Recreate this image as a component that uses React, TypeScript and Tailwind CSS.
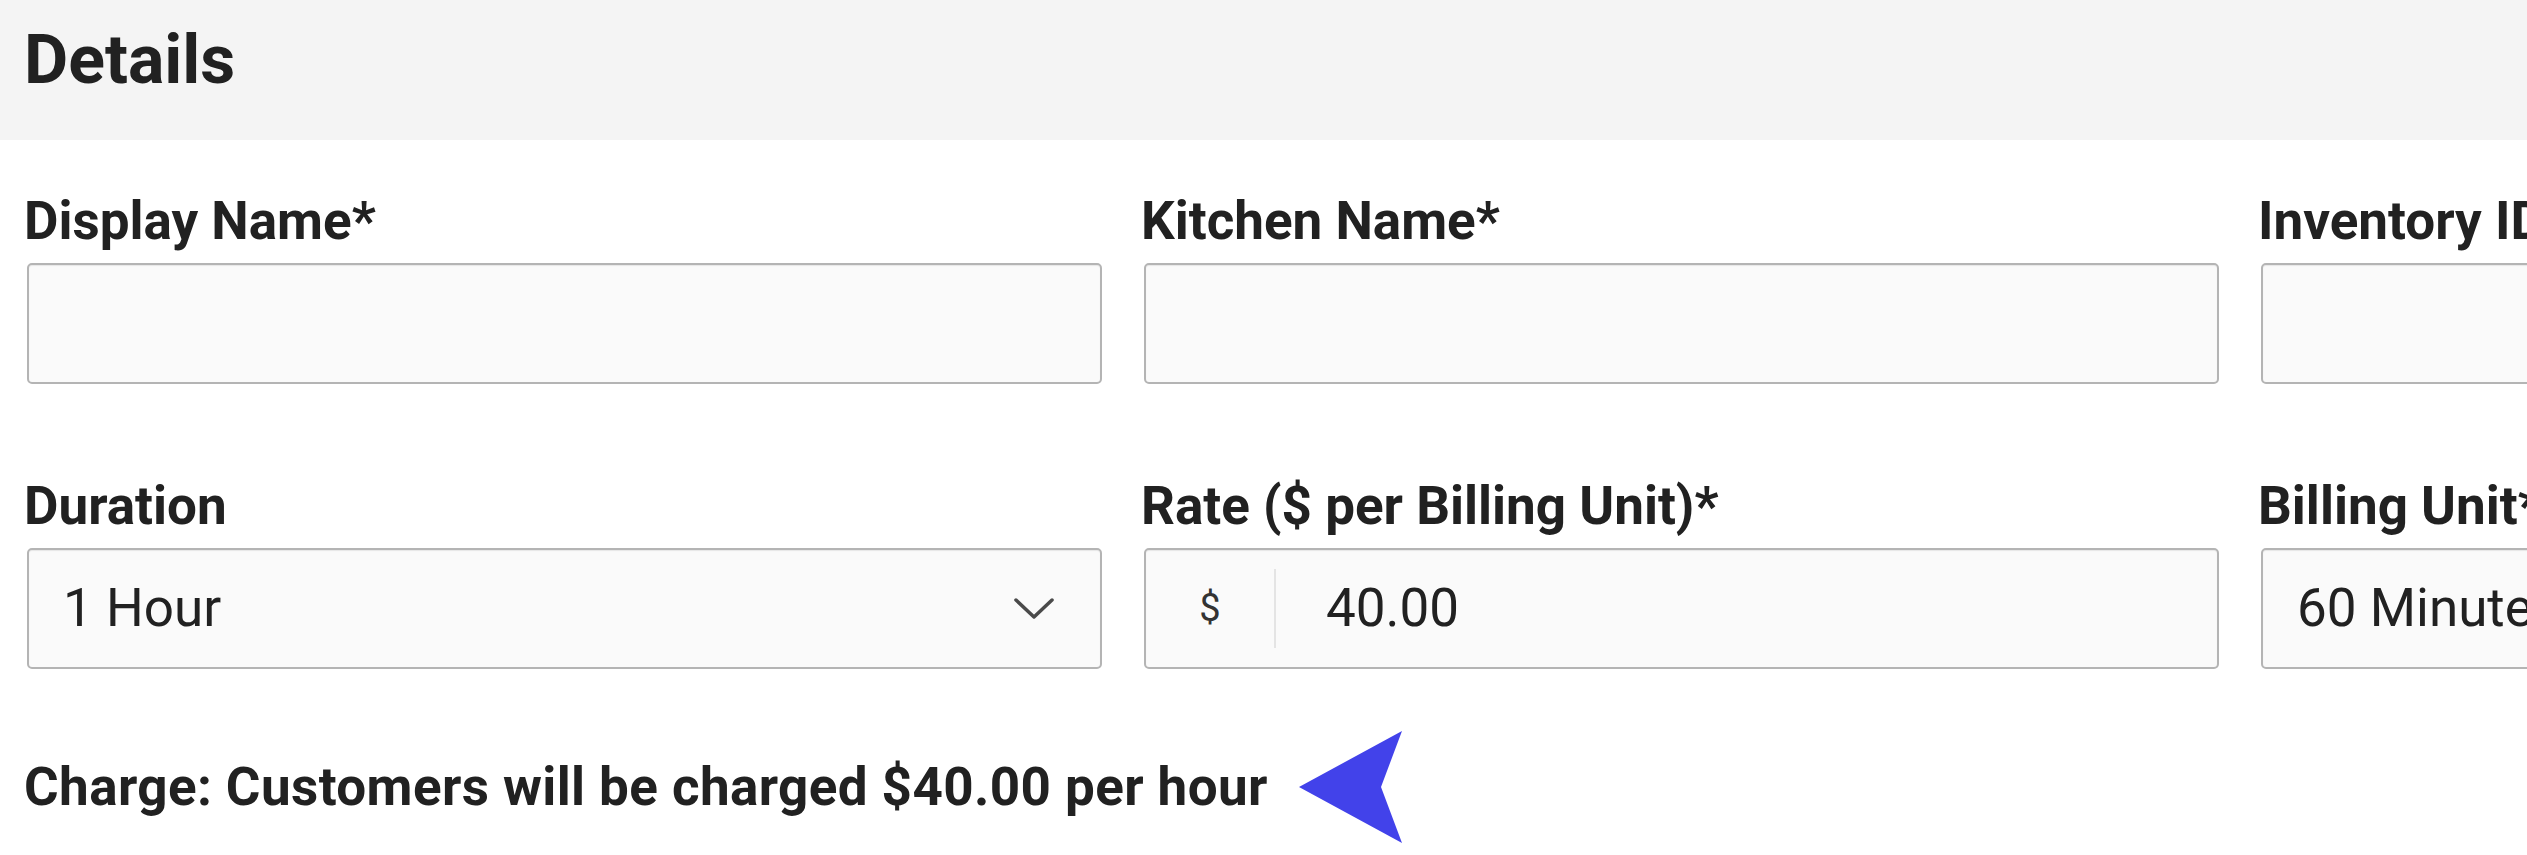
import { ReactNode } from 'react';

const font = { fontFamily: 'Roboto, "Noto Sans", sans-serif' };

function Field({ label, children }: { label: string; children: ReactNode }) {
  return (
    <div className="flex flex-col">
      <label className="-ml-[3px] mb-[12px] whitespace-nowrap text-[53px] leading-[60px] font-bold text-[#212121]">
        {label}
      </label>
      {children}
    </div>
  );
}

function Box({ children }: { children?: ReactNode }) {
  return (
    <div className="flex h-[121px] items-center rounded-[5px] border-2 border-[#b4b4b4] bg-[#fafafa] shadow-[inset_0_1px_1px_rgba(0,0,0,0.08)]">
      {children}
    </div>
  );
}

function Chevron() {
  return (
    <svg width="40" height="22" viewBox="0 0 40 22" fill="none">
      <polyline points="2,2 20,19 38,2" stroke="#4a4a4a" strokeWidth="3.5" strokeLinecap="round" strokeLinejoin="round" />
    </svg>
  );
}

export default function App() {
  return (
    <div className="h-[855px] w-[2527px] overflow-hidden bg-white" style={font}>
      <div className="h-[140px] bg-[#f4f4f4] pl-[24px] pt-[26px]">
        <h2 className="text-[68px] leading-none font-bold text-[#212121]">Details</h2>
      </div>

      <div className="pl-[27px] pt-[51px]">
        <div className="grid w-[3309px] grid-cols-[1075px_1075px_1075px] gap-x-[42px] gap-y-[92px]">
          <Field label="Display Name*">
            <Box />
          </Field>
          <Field label="Kitchen Name*">
            <Box />
          </Field>
          <Field label="Inventory ID">
            <Box />
          </Field>

          <Field label="Duration">
            <Box>
              <span className="flex-1 pl-[34px] text-[53px] text-[#212121]">1 Hour</span>
              <span className="mr-[46px] flex">
                <Chevron />
              </span>
            </Box>
          </Field>
          <Field label="Rate ($ per Billing Unit)*">
            <Box>
              <span className="flex w-[128px] justify-center text-[38px] text-[#333]">$</span>
              <span className="h-[79px] w-[2px] bg-[#e4e4e4]" />
              <span className="pl-[50px] text-[53px] text-[#212121]">40.00</span>
            </Box>
          </Field>
          <Field label="Billing Unit*">
            <Box>
              <span className="flex-1 pl-[34px] text-[53px] text-[#212121]">60 Minutes</span>
              <span className="mr-[46px] flex">
                <Chevron />
              </span>
            </Box>
          </Field>
        </div>

        <div className="mt-[62px] flex items-center">
          <p className="-ml-[3px] whitespace-nowrap text-[53px] leading-[60px] font-bold tracking-[0.4px] text-[#212121]">
            Charge: Customers will be charged $40.00 per hour
          </p>
          <svg className="ml-[31px]" width="103" height="112" viewBox="0 0 103 112">
            <polygon points="0,56 103,0 82,56 103,112" fill="#4242ea" />
          </svg>
        </div>
      </div>
    </div>
  );
}
